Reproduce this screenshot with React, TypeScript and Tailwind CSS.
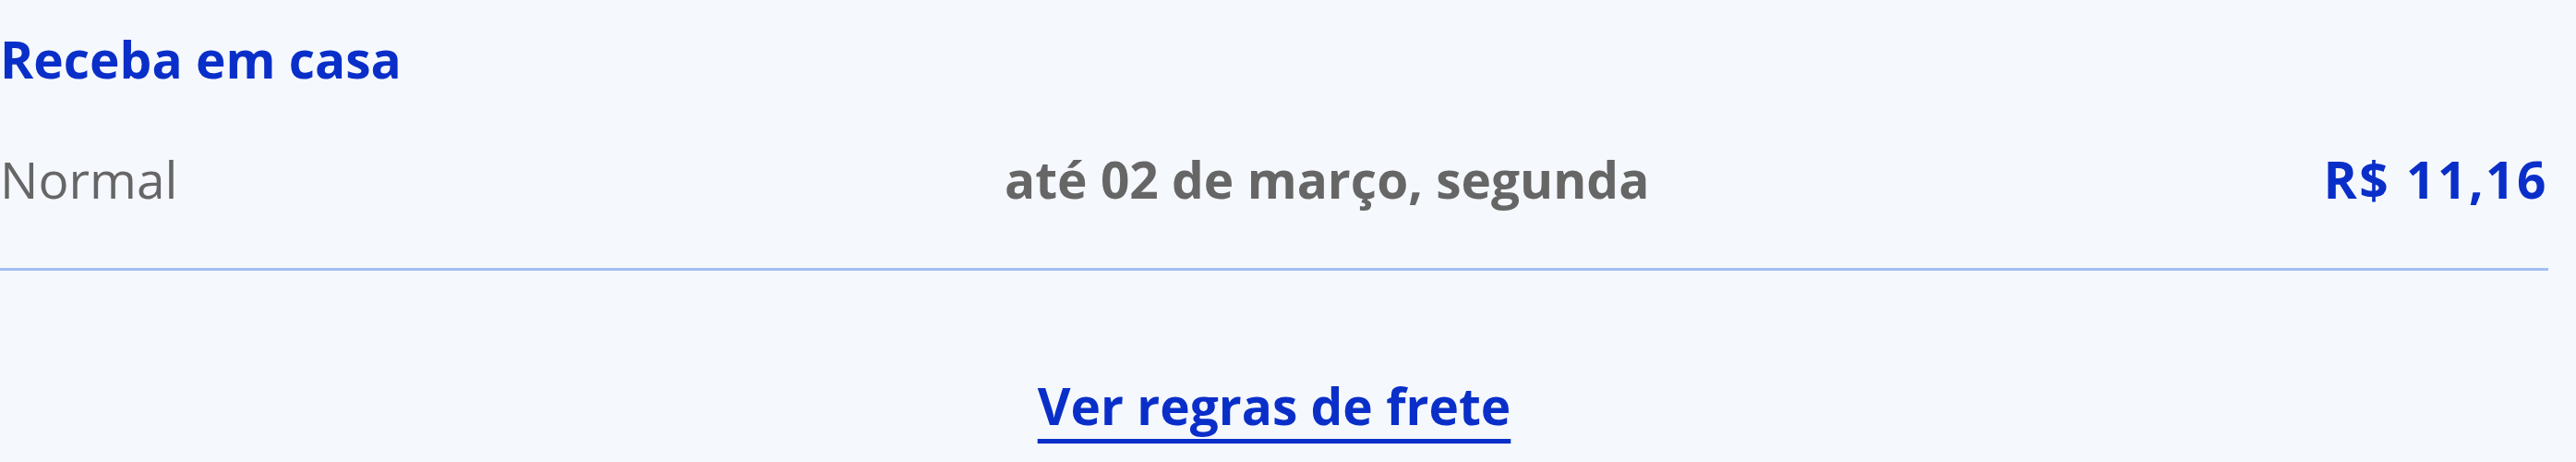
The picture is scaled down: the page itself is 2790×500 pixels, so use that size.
import React from "react";

export default function App() {
  return (
    <div
      className="w-[2790px] h-[500px] bg-[#f5f8fd] text-[55px] leading-none"
      style={{ fontFamily: '"Open Sans", "Noto Sans", sans-serif' }}
    >
      <div className="w-[2760px] pt-[36px]">
        <h2 className="font-bold text-[#0a2fc9]">Receba em casa</h2>

        <div className="mt-[75px] flex items-baseline">
          <span className="w-[1088px] shrink-0 text-[#666666]">Normal</span>
          <span className="font-bold text-[#666666]">até 02 de março, segunda</span>
          <span className="ml-auto font-bold tracking-[2.5px] text-[#0a2fc9]">R$ 11,16</span>
        </div>

        <div className="mt-[69px] h-[3px] bg-[#a3bef3]" />

        <div className="mt-[118px] flex justify-center">
          <a
            href="#"
            className="font-bold text-[#0a2fc9] underline decoration-[5px] underline-offset-[15px]"
          >
            Ver regras de frete
          </a>
        </div>
      </div>
    </div>
  );
}
